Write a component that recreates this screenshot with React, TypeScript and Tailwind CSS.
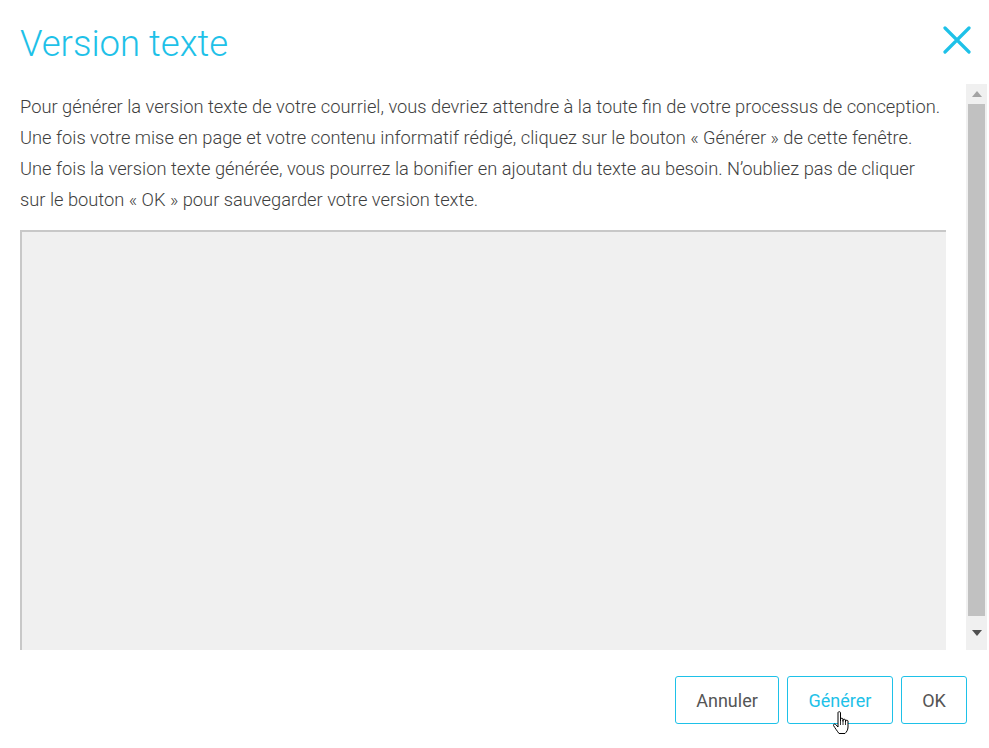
import React from "react";

export default function App() {
  return (
    <div className="w-[989px] h-[748px] bg-white relative overflow-hidden" style={{ fontFamily: "Roboto, 'Noto Sans', sans-serif" }}>
      <div className="h-[84px] flex items-start justify-between pl-[20px] pr-[18px]">
        <h1 className="text-[36.5px] leading-[36px] font-light text-[#1ec1e8] mt-[26px]">Version texte</h1>
        <svg width="28" height="28" viewBox="0 0 28 28" className="mt-[26px]">
          <path d="M2 2 L26 26 M26 2 L2 26" stroke="#1ec1e8" strokeWidth="3.2" strokeLinecap="round" />
        </svg>
      </div>
      <div className="flex h-[566px]">
        <div className="w-[946px] pl-[20px] overflow-hidden">
          <p className="text-[18.3px] leading-[31px] font-light text-[#3e3e3e] pt-[7px] whitespace-nowrap">
            Pour générer la version texte de votre courriel, vous devriez attendre à la toute fin de votre processus de conception.<br />
            Une fois votre mise en page et votre contenu informatif rédigé, cliquez sur le bouton « Générer » de cette fenêtre.<br />
            Une fois la version texte générée, vous pourrez la bonifier en ajoutant du texte au besoin. N’oubliez pas de cliquer<br />
            sur le bouton « OK » pour sauvegarder votre version texte.
          </p>
          <div className="mt-[15px] w-[926px] h-[500px] bg-[#f0f0f0] border-t-2 border-l-2 border-t-[#c8c8c8] border-l-[#c8c8c8]"></div>
        </div>
        <div className="ml-[20px] w-[21px] bg-[#f0f0f0] flex flex-col items-center">
          <div className="h-[20px] flex items-center justify-center">
            <svg width="10" height="6" viewBox="0 0 10 6"><path d="M5 0 L10 6 L0 6 Z" fill="#a3a3a3" /></svg>
          </div>
          <div className="w-[17px] h-[512px] bg-[#c1c1c1]"></div>
          <div className="flex-1 flex items-center justify-center">
            <svg width="10" height="6" viewBox="0 0 10 6"><path d="M0 0 L10 0 L5 6 Z" fill="#505050" /></svg>
          </div>
        </div>
      </div>
      <div className="flex justify-end gap-[8px] pr-[22px] pt-[26px]">
        <button className="w-[104px] h-[48px] border border-[#1ec1e8] rounded-[3px] text-[18px] text-[#555555] bg-white">Annuler</button>
        <button className="w-[106px] h-[48px] border border-[#1ec1e8] rounded-[3px] text-[18px] text-[#1ec1e8] bg-white">Générer</button>
        <button className="w-[66px] h-[48px] border border-[#1ec1e8] rounded-[3px] text-[18px] text-[#555555] bg-white">OK</button>
      </div>
      <svg className="absolute left-[832px] top-[710px]" width="20" height="26" viewBox="0 0 20 26">
        <path d="M6 2.5 C6 1.5 8.5 1.5 8.5 2.5 L8.5 11 L8.5 9 C8.5 8 11 8 11 9 L11 11.5 L11 10 C11 9 13.5 9 13.5 10 L13.5 12 L13.5 11 C13.5 10 16 10 16 11 L16 17 C16 20 14.5 22 13 23.5 L7 23.5 C5.5 21.5 3 18 1.5 15.5 C1 14.5 2.5 13.5 3.5 14.3 L6 17 Z" fill="white" stroke="black" strokeWidth="1" strokeLinejoin="round" />
        <path d="M8.5 11 L8.5 15 M11 11.5 L11 15 M13.5 12 L13.5 15" stroke="black" strokeWidth="0.8" />
      </svg>
    </div>
  );
}
